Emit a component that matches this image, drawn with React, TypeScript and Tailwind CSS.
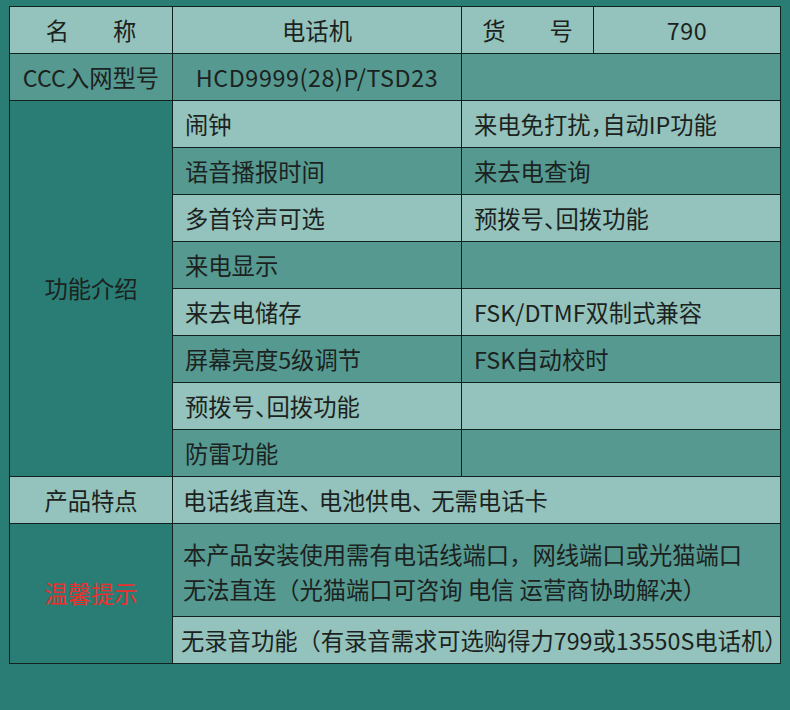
const features: [string, string][] = [
  ["闹钟", "来电免打扰，自动IP功能"],
  ["语音播报时间", "来去电查询"],
  ["多首铃声可选", "预拨号、回拨功能"],
  ["来电显示", ""],
  ["来去电储存", "FSK/DTMF双制式兼容"],
  ["屏幕亮度5级调节", "FSK自动校时"],
  ["预拨号、回拨功能", ""],
  ["防雷功能", ""],
];

const light = "bg-[#94c2bc]";
const mid = "bg-[#559990]";
const deep = "bg-[#2a7d74]";
// half-width punctuation (、，) as in the reference
const halt = "[font-feature-settings:'halt']";

export default function App() {
  return (
    <div
      className="w-[790px] h-[710px] bg-[#2a7d74] pt-[6px] pl-[9px] text-[#1b2220] text-[23.3px]"
      style={{ fontFamily: '"Noto Sans CJK SC", "Noto Sans", sans-serif' }}
    >
      <div className="grid w-[772px] grid-cols-[162px_288px_131px_186px] grid-rows-[repeat(11,46px)_92px_46px] gap-px bg-[#10211e] p-px">
        {/* header */}
        <div className={`${light} flex items-center justify-center gap-[44px]`}>
          <span>名</span>
          <span>称</span>
        </div>
        <div className={`${light} flex items-center justify-center`}>电话机</div>
        <div className={`${light} flex items-center justify-center gap-[44px]`}>
          <span>货</span>
          <span>号</span>
        </div>
        <div className={`${light} flex items-center justify-center tracking-[0.5px]`}>790</div>

        {/* model */}
        <div className={`${mid} flex items-center justify-center`}>CCC入网型号</div>
        <div className={`${mid} flex items-center justify-center tracking-[0.6px]`}>
          HCD9999(28)P/TSD23
        </div>
        <div className={`${mid} col-span-2`} />

        {/* features */}
        <div className={`${deep} row-span-8 flex items-center justify-center`}>功能介绍</div>
        {features.map(([left, right], i) => {
          const bg = i % 2 === 0 ? light : mid;
          return [
            <div key={`l${i}`} className={`${bg} ${halt} flex items-center pl-[12px]`}>
              {left}
            </div>,
            <div key={`r${i}`} className={`${bg} ${halt} col-span-2 flex items-center pl-[12px]`}>
              {right}
            </div>,
          ];
        })}

        {/* highlights */}
        <div className={`${light} flex items-center justify-center`}>产品特点</div>
        <div className={`${light} col-span-3 flex items-center pl-[10px]`}>
          <span>
            电话线直连<span className="tracking-[-4px]">、</span>电池供电
            <span className="tracking-[-4px]">、</span>无需电话卡
          </span>
        </div>

        {/* notes */}
        <div className={`${deep} row-span-2 flex items-center justify-center text-[#e8302e]`}>
          温馨提示
        </div>
        <div className={`${mid} col-span-3 flex flex-col justify-center pl-[10px] pt-[4px] leading-[35px]`}>
          <span>本产品安装使用需有电话线端口，网线端口或光猫端口</span>
          <span>无法直连（光猫端口可咨询 电信 运营商协助解决）</span>
        </div>
        <div className={`${light} col-span-3 flex items-center pl-[8px] whitespace-nowrap`}>
          无录音功能（有录音需求可选购得力799或13550S电话机）
        </div>
      </div>
    </div>
  );
}
